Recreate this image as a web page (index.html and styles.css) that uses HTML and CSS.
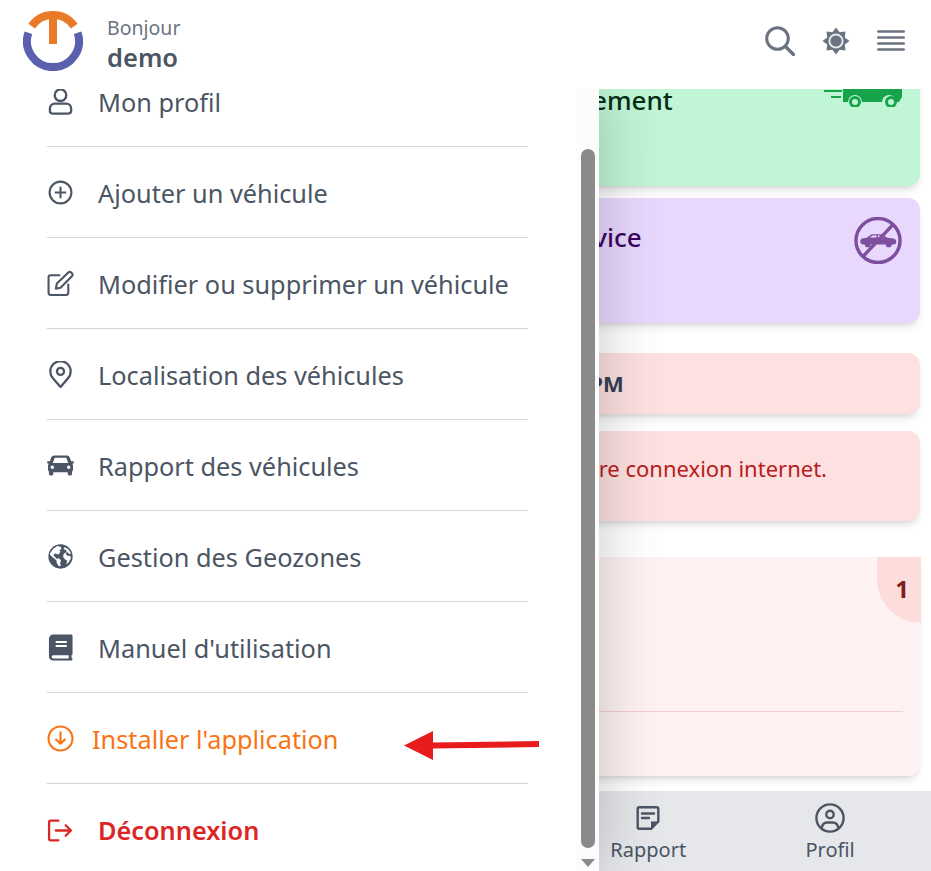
FILE: index.html
```html
<!DOCTYPE html>
<html lang="fr">
<head>
<meta charset="utf-8">
<title>Tableau de bord</title>
<link rel="stylesheet" href="styles.css">
</head>
<body>
<div class="app">
  <header class="topbar">
    <div class="brand">
      <svg class="logo" viewBox="0 0 60 60"><path d="M8.700 15.100A26 26 0 0 1 51.300 15.100" fill="none" stroke="#e97a27" stroke-width="8"/><rect x="26" y="3" width="8" height="30" fill="#e97a27"/><path d="M5.400 21.700A26 26 0 1 0 54.600 21.700" fill="none" stroke="#5a60ad" stroke-width="8"/></svg>
      <div class="greet"><span class="hello">Bonjour</span><strong class="user">demo</strong></div>
    </div>
    <div class="tools">
      <svg class="tool-search" viewBox="0 0 30 30"><circle cx="12.500" cy="12.500" r="10.800" fill="none" stroke="#6b7280" stroke-width="3"/><path d="M20.500 20.500 28.500 28.500" stroke="#6b7280" stroke-width="3.400" stroke-linecap="round"/></svg>
      <svg class="tool-sun" viewBox="0 0 28 28"><path fill="#6b7280" d="M14 .5 17.600 5.200 23.500 4.500 22.800 10.400 27.500 14 22.800 17.600 23.500 23.500 17.600 22.800 14 27.500 10.400 22.800 4.500 23.500 5.200 17.600 .5 14 5.200 10.400 4.500 4.500 10.400 5.200z"/><circle cx="14" cy="14" r="7.600" fill="#e5e7eb"/><circle cx="14" cy="14" r="5.600" fill="#6b7280"/></svg>
      <svg class="tool-menu" viewBox="0 0 28 22"><g stroke="#6b7280" stroke-width="2.400" stroke-linecap="round"><path d="M1.200 1.500H26.800M1.200 7.500H26.800M1.200 13.500H26.800M1.200 19.500H26.800"/></g></svg>
    </div>
  </header>

  <div class="stage">
    <main class="feed">
      <section class="card card-green">
        <h2 class="card-title t-moving">En mouvement</h2>
        <svg class="truck" viewBox="0 0 78 46"><g fill="#16a34a"><rect x="0" y="29" width="18" height="2"/><rect x="7" y="35" width="10" height="2"/><path d="M19 10h59v26l-3 5h-3a7 7 0 0 0-14 0H38a7 7 0 0 0-14 0h-5z"/></g><g fill="#c0f6d5" stroke="#16a34a" stroke-width="3"><circle cx="31" cy="41" r="4.500"/><circle cx="67" cy="41" r="4.500"/></g></svg>
      </section>
      <section class="card card-purple">
        <h2 class="card-title t-off">Hors service</h2>
        <svg class="nocar" viewBox="0 0 48 48"><circle cx="24" cy="24" r="22.500" fill="none" stroke="#7f4f9f" stroke-width="3.500"/><path fill="#7f4f9f" d="M6 23.500l1.500-1.500 5-.8 5-3.700h11l5 3.600 6.500 .9 2.500 1.500v3.500l-2 1h-2.500a3 3 0 0 1-6 0H16.500a3 3 0 0 1-6 0H8l-2-1.500z"/><path fill="#e9d8fd" d="M15.500 21l3-2h4v2zM24 19h4l2.500 2H24z"/><path d="M39 8 9 40" stroke="#7f4f9f" stroke-width="3.500"/></svg>
      </section>
      <section class="card card-time"><strong class="time">12:00 PM</strong></section>
      <section class="card card-error"><p class="error">Vérifiez votre connexion internet.</p></section>
      <section class="card card-alert">
        <span class="badge">1</span>
        <hr class="alert-rule">
      </section>
    </main>
  </div>

  <footer class="tabbar">
    <a class="tab tab-report"><svg class="tab-note" viewBox="0 0 24 24"><g fill="none" stroke="#4b5563" stroke-width="2.400" stroke-linejoin="round"><path d="M3.200 1.200h17.600a1.500 1.500 0 0 1 1.500 1.500v12.800l-7.300 7.300H3.200a1.500 1.500 0 0 1-1.500-1.500V2.700a1.500 1.500 0 0 1 1.500-1.500z"/><path d="M6 7.500h12M6 12h7" stroke-linecap="round"/></g><path d="M15 23v-7.500h7.500z" fill="#4b5563"/></svg><span>Rapport</span></a>
    <a class="tab"><svg viewBox="0 0 30 30"><g fill="none" stroke="#4b5563" stroke-width="2.400"><circle cx="15" cy="15" r="13.600"/><circle cx="15" cy="11.500" r="3.700"/><path d="M6.500 25.500c.7-4 3-6 5.500-6h6c2.500 0 4.800 2 5.500 6"/></g></svg><span>Profil</span></a>
  </footer>

  <aside class="drawer">
    <nav class="menu">
      <div class="menu-list">
        <a class="row"><svg class="ico" viewBox="0 0 26 28"><g fill="none" stroke="#4b5563" stroke-width="2.400"><circle cx="13" cy="7.500" r="6"/><path d="M7 16.200h12a5 5 0 0 1 5 5v2.500a2.800 2.800 0 0 1-2.800 2.800H4.800A2.800 2.800 0 0 1 2 23.700v-2.500a5 5 0 0 1 5-5z"/></g></svg><span>Mon profil</span></a>
        <a class="row"><svg class="ico" viewBox="0 0 26 26"><g fill="none" stroke="#4b5563" stroke-width="2"><circle cx="13" cy="13" r="10.500"/><path d="M13 7.500v11M7.500 13h11"/></g></svg><span>Ajouter un véhicule</span></a>
        <a class="row"><svg class="ico" viewBox="0 0 26 26"><g fill="none" stroke="#4b5563" stroke-width="2" stroke-linejoin="round" stroke-linecap="round"><path d="M12 5H3.500A2 2 0 0 0 1.500 7v15a2 2 0 0 0 2 2h15a2 2 0 0 0 2-2v-8"/><path d="M9.500 13 20.500 2.500a2 2 0 0 1 2.800 0l.7.700a2 2 0 0 1 0 2.800L13 17l-4.500 1z"/></g></svg><span>Modifier ou supprimer un véhicule</span></a>
        <a class="row"><svg class="ico" viewBox="0 0 26 26"><g fill="none" stroke="#4b5563" stroke-width="2.200"><path d="M13 25 5.700 16.500A9.800 9.800 0 1 1 20.300 16.500z" stroke-linejoin="round"/><circle cx="13" cy="10" r="3.400"/></g></svg><span>Localisation des véhicules</span></a>
        <a class="row"><svg class="ico" viewBox="0 0 28 24"><path fill="#4b5563" fill-rule="evenodd" d="M7.500 1.500h13c1.500 0 2.500 .8 3 2l1.500 4h2.200c.5 0 .8 .4 .7 .8l-.4 1.400c-.1 .4-.4 .6-.8 .6h-.7c.8 .8 1 1.600 1 2.700v3c0 1-.3 1.700-1 2.300v2.500c0 .8-.7 1.500-1.500 1.500h-1.500c-.8 0-1.500-.7-1.500-1.500v-1.800H6.500v1.800c0 .8-.7 1.500-1.500 1.500H3.500C2.700 22.300 2 21.600 2 20.800v-2.500c-.7-.6-1-1.300-1-2.300v-3c0-1.100 .2-1.900 1-2.700h-.7c-.4 0-.7-.2-.8-.6L.100 8.300c-.1-.4 .2-.8 .7-.8H3l1.500-4c.5-1.200 1.500-2 3-2zM8 4 6 9.300h16L20 4zM5.500 12a1.800 1.800 0 1 0 0 3.600 1.800 1.800 0 0 0 0-3.600zm17 0a1.800 1.800 0 1 0 0 3.600 1.800 1.800 0 0 0 0-3.600z"/></svg><span>Rapport des véhicules</span></a>
        <a class="row"><svg class="ico" viewBox="0 0 26 26"><circle cx="13" cy="13" r="11.700" fill="#4b5563"/><path fill="#fff" d="M6 5.500 10 3l3 .5 1 2-2 1.500 1 1.500-2 2.500-3-1-2 1.500 3 3.500h3l1.500 2-1 2.500 1 2.500-2 .5-2-3-.5-3L4 12.500l-1.500-2zM17 3.800l3.500 2.200 2.800 4-2 .5L20 9l-2 .5 1 2.500 3.500.5.500 2.500-2.500 4-2 1.500 1-3.500-2-1-2-2.500.5-3 3-2-1-2-2-.5z"/></svg><span>Gestion des Geozones</span></a>
        <a class="row"><svg class="ico" viewBox="0 0 26 28"><path fill="#4b5563" fill-rule="evenodd" d="M5.500 .5H24a1.500 1.500 0 0 1 1.500 1.500v18.500c0 .7-.5 1.300-1 1.500v3c.5 .2 1 .7 1 1.200 0 .8-.7 1.300-1.500 1.300H5.500C2.800 27.500 1 25.500 1 23V5C1 2.500 3 .5 5.500 .5zM8 7.300v2h11.500v-2zm0 4.200v2h11.500v-2zM5.500 22a1.700 1.700 0 0 0 0 3.400H21.500V22z"/></svg><span>Manuel d'utilisation</span></a>
        <a class="row row-install"><svg class="ico ico-install" viewBox="0 0 28 28"><g fill="none" stroke="#f97316" stroke-width="2.200" stroke-linecap="round" stroke-linejoin="round"><circle cx="14" cy="14" r="12.400"/><path d="M14 7.500v12M9.500 15l4.500 4.500 4.500-4.500"/></g></svg><span>Installer l'application</span></a>
        <a class="row row-logout"><svg class="ico" viewBox="0 0 26 22"><g fill="none" stroke="#dc2626" stroke-width="2.200" stroke-linecap="round" stroke-linejoin="round"><path d="M11 1.500H3.500a1.500 1.500 0 0 0-1.500 1.500v16a1.500 1.500 0 0 0 1.500 1.500H11"/><path d="M8.500 11h14.500M18 6l5 5-5 5"/></g></svg><span>Déconnexion</span></a>
      </div>
    </nav>
    <div class="scrollbar"><div class="thumb"></div><div class="scroll-arrow"></div></div>
  </aside>

  <svg class="annotation" viewBox="0 0 136 30"><path fill="#e81c1c" d="M0 15.500 29 1v11.500l106-1.500v6l-106 1.500V30z"/></svg>
</div>
</body>
</html>
```
FILE: styles.css
```css
* { box-sizing: border-box; }
html, body { margin: 0; padding: 0; height: 100%; }
body {
  background: #fff;
  color: #4b5563;
  font-family: "Noto Sans", "Open Sans", sans-serif;
  overflow: hidden;
}
.app { position: relative; display: flex; flex-direction: column; width: 931px; height: 871px; overflow: hidden; }

.topbar {
  position: relative;
  z-index: 3;
  flex: 0 0 89px;
  display: flex;
  justify-content: space-between;
  align-items: flex-start;
  background: #fff;
  padding: 11px 26px 0 23px;
}
.brand { display: flex; gap: 24px; }
.logo { width: 60px; height: 60px; display: block; }
.greet { display: flex; flex-direction: column; padding-top: 4px; }
.hello { font-size: 19.500px; line-height: 26px; color: #6b7280; }
.user { font-size: 25.500px; line-height: 33px; font-weight: 600; color: #4b5563; }
.tools { display: flex; align-items: center; gap: 27px; padding-top: 15px; }
.tool-search { width: 30px; height: 30px; display: block; }
.tool-sun { width: 28px; height: 28px; display: block; }
.tool-menu { width: 28px; height: 22px; display: block; }

.stage { flex: 1 1 auto; min-height: 0; overflow: hidden; }
.feed { display: flex; flex-direction: column; padding: 0 11px; margin-top: -28px; }
.card { position: relative; border-radius: 12px; box-shadow: 0 6px 10px -3px rgba(0,0,0,.14), 0 3px 5px -3px rgba(0,0,0,.08); }
.card-green { height: 125px; background: #c0f6d5; }
.card-purple { height: 125px; margin-top: 12px; background: #e9d8fd; }
.card-time { height: 61px; margin-top: 30px; background: #fde0e0; display: flex; align-items: center; }
.card-error { height: 90px; margin-top: 17px; background: #fde0e0; }
.card-alert { height: 219px; margin-top: 36px; background: #fef2f2; border-radius: 0 0 12px 12px; }
.card-title { margin: 0; position: absolute; top: 24px; font-size: 26px; line-height: 30px; font-weight: 500; white-space: nowrap; }
.t-moving { left: 473px; color: #052e16; }
.t-off { left: 478px; color: #3b0764; }
.truck { position: absolute; right: 18px; top: 0; width: 78px; height: 46px; }
.nocar { position: absolute; right: 18px; top: 19px; width: 48px; height: 47px; }
.time { margin-left: 516px; margin-top: -1px; font-size: 22px; font-weight: 700; color: #334155; }
.error { margin: 0; position: absolute; top: 21px; right: 93px; font-size: 22px; line-height: 32px; color: #b91c1c; white-space: nowrap; }
.badge {
  position: absolute;
  top: 0;
  right: -1px;
  width: 44px;
  height: 66px;
  border-radius: 0 0 0 44px;
  background: #fddcdc;
  color: #7f1d1d;
  font-size: 24px;
  font-weight: 700;
  text-align: right;
  padding: 16px 12px 0 0;
  line-height: 32px;
}
.alert-rule { position: absolute; left: 0; right: 17px; top: 154px; margin: 0; border: 0; border-top: 1px solid #f5cdcd; }

.drawer {
  position: absolute;
  z-index: 2;
  left: 0;
  top: 89px;
  bottom: 0;
  width: 599px;
  display: flex;
  background: #fff;
  box-shadow: 0 0 60px rgba(0,0,0,.22);
}
.menu { flex: 1 1 auto; overflow: hidden; padding: 0 48px 0 47px; }
.menu-list { margin-top: -33px; }
.row {
  display: flex;
  align-items: center;
  height: 91px;
  padding: 1px 0 0 0;
  border-bottom: 1px solid #d1d5db;
  font-size: 25.300px;
  line-height: 28px;
  color: #4b5563;
  white-space: nowrap;
}
.row:last-child { border-bottom: 0; }
.ico { flex: 0 0 27px; width: 27px; height: 27px; margin-right: 24px; }
.row-install { color: #f97316; }
.ico-install { margin-right: 18px; }
.row-logout { color: #dc2626; font-weight: 600; }

.scrollbar { flex: 0 0 23px; background: #fcfcfc; padding: 60px 4px 0 5px; }
.thumb { width: 14px; height: 699px; background: #8a8a8a; border-radius: 7px; }
.scroll-arrow { width: 0; height: 0; margin-top: 11px; border-left: 7px solid transparent; border-right: 7px solid transparent; border-top: 8px solid #8a8a8a; }

.tabbar {
  flex: 0 0 80px;
  display: grid;
  grid-template-columns: repeat(5, 1fr);
  padding: 0 10px 0 12px;
  background: #e5e7eb;
}
.tab { display: flex; flex-direction: column; align-items: center; padding-top: 12px; font-size: 20px; line-height: 28px; color: #4b5563; }
.tab svg { width: 30px; height: 30px; margin-bottom: 3px; display: block; }
.tab .tab-note { width: 24px; height: 24px; margin: 3px 0 6px; }
.tab-report { grid-column: 4; }

.annotation { position: absolute; z-index: 4; left: 404px; top: 730px; width: 136px; height: 30px; }
```
